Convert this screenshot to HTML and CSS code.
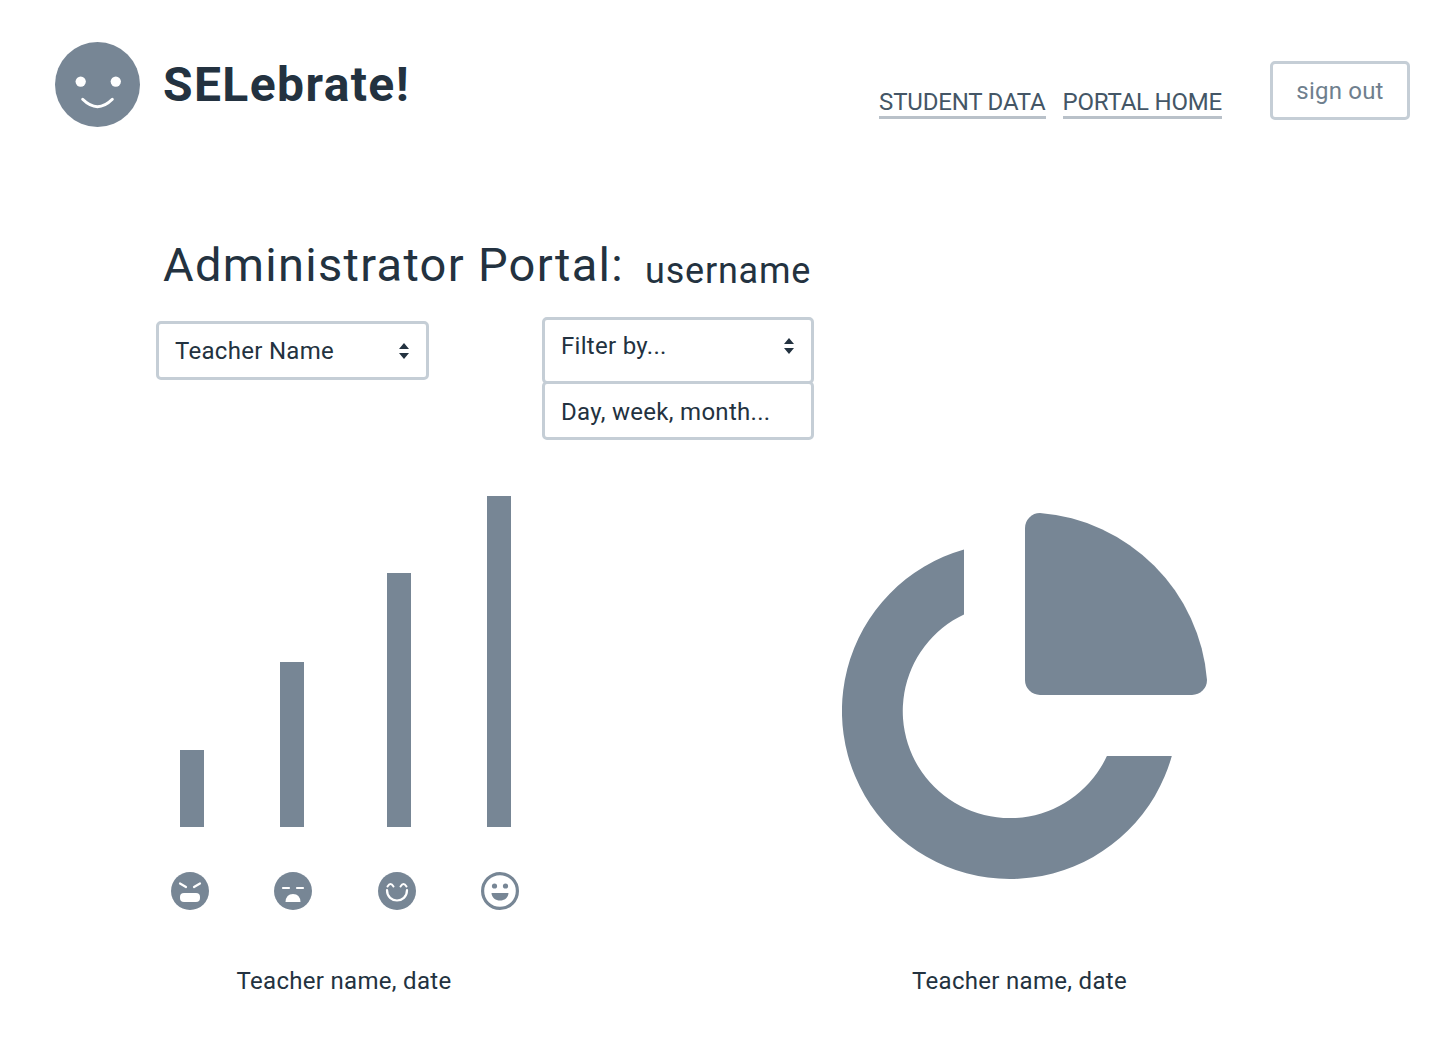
FILE: index.html
```html
<!DOCTYPE html>
<html lang="en">
<head>
    <meta charset="UTF-8">
    <title>SELebrate! Administrator Portal</title>
    <link rel="stylesheet" href="styles.css">
</head>
<body>
    <header class="site-header">
        <div class="brand">
            <svg class="brand-logo" viewBox="0 0 86 86">
                <circle cx="43" cy="43" r="43" fill="#778695"/>
                <circle cx="26" cy="40" r="5.2" fill="#fff"/>
                <circle cx="61.5" cy="40" r="5.2" fill="#fff"/>
                <path d="M28 58 Q43 73 58 58" fill="none" stroke="#fff" stroke-width="3" stroke-linecap="round"/>
            </svg>
            <span class="brand-name">SELebrate!</span>
        </div>
        <nav class="site-nav">
            <a class="nav-link" href="#">STUDENT DATA</a>
            <a class="nav-link" href="#">PORTAL HOME</a>
        </nav>
        <button class="sign-out">sign out</button>
    </header>

    <main class="portal">
        <h1 class="portal-title">Administrator Portal:<span class="portal-user">username</span></h1>

        <div class="filters">
            <div class="picker picker-teacher">
                <span>Teacher Name</span>
                <svg class="updown" viewBox="0 0 10 16"><path d="M5 0 L10 6 H0 Z M5 16 L0 10 H10 Z"/></svg>
            </div>
            <div class="filter-stack">
                <div class="picker picker-filter">
                    <span>Filter by...</span>
                    <svg class="updown" viewBox="0 0 10 16"><path d="M5 0 L10 6 H0 Z M5 16 L0 10 H10 Z"/></svg>
                </div>
                <div class="picker picker-range">
                    <span>Day, week, month...</span>
                </div>
            </div>
        </div>

        <div class="charts">
            <section class="chart chart-bars">
                <div class="bars">
                    <div class="bar" style="height: 77px"></div>
                    <div class="bar" style="height: 165px"></div>
                    <div class="bar" style="height: 254px"></div>
                    <div class="bar" style="height: 331px"></div>
                </div>
                <div class="moods">
                    <svg class="mood" viewBox="0 0 38 38">
                        <circle cx="19" cy="19" r="19" fill="#778695"/>
                        <path d="M9 11.5 L15 15 M29 11.5 L23 15" stroke="#fff" stroke-width="2.2" stroke-linecap="round"/>
                        <rect x="9" y="21" width="20" height="9" rx="4" fill="#fff"/>
                    </svg>
                    <svg class="mood" viewBox="0 0 38 38">
                        <circle cx="19" cy="19" r="19" fill="#778695"/>
                        <path d="M9 16 H15 M23 16 H29" stroke="#fff" stroke-width="2.2" stroke-linecap="round"/>
                        <path d="M11.5 30 Q12 22 19 22 Q26 22 26.5 30 Z" fill="#fff"/>
                    </svg>
                    <svg class="mood" viewBox="0 0 38 38">
                        <circle cx="19" cy="19" r="19" fill="#778695"/>
                        <path d="M9.5 14.5 Q12.5 9.5 15.5 14.5 M22.5 14.5 Q25.5 9.5 28.5 14.5" fill="none" stroke="#fff" stroke-width="2" stroke-linecap="round"/>
                        <path d="M9 18 C9 32 29 32 29 18" fill="none" stroke="#fff" stroke-width="2.2" stroke-linecap="round"/>
                    </svg>
                    <svg class="mood" viewBox="0 0 38 38">
                        <circle cx="19" cy="19" r="17.4" fill="#fff" stroke="#778695" stroke-width="3.2"/>
                        <circle cx="13.5" cy="14" r="2.6" fill="#778695"/>
                        <circle cx="24.5" cy="14" r="2.6" fill="#778695"/>
                        <path d="M10.5 21 H27.5 C27 31 11 31 10.5 21 Z" fill="#778695"/>
                    </svg>
                </div>
                <p class="chart-caption">Teacher name, date</p>
            </section>

            <section class="chart chart-donut">
                <svg class="donut" viewBox="0 0 365 366">
                    <path fill="#778695" d="M122 36.4 V101.4 A107 107 0 1 0 264.9 243 H329.8 A168 168 0 1 1 122 36.4 Z"/>
                    <path fill="#778695" d="M183 15 A15 15 0 0 1 198 0 A182 182 0 0 1 365 167 A15 15 0 0 1 350 182 H198 A15 15 0 0 1 183 167 Z"/>
                </svg>
                <p class="chart-caption">Teacher name, date</p>
            </section>
        </div>
    </main>
</body>
</html>
```

FILE: styles.css
```css
body {
    margin: 0;
    background-color: white;
    color: #233240;
    font-family: Roboto, "Noto Sans", Arial, sans-serif;
}

.site-header {
    display: flex;
    align-items: flex-start;
    height: 86px;
    padding: 42px 30px 0 55px;
}

.brand {
    display: flex;
    align-items: flex-start;
    gap: 23px;
    margin-right: auto;
}

.brand-logo {
    display: block;
    width: 85px;
    height: 85px;
}

.brand-name {
    font-size: 48px;
    font-weight: 700;
    line-height: 86px;
    letter-spacing: 1.4px;
}

.site-nav {
    display: flex;
    gap: 17px;
    margin-top: 47px;
    margin-right: 48px;
}

.nav-link {
    color: #445666;
    font-size: 24px;
    line-height: 26px;
    letter-spacing: -0.2px;
    text-decoration: none;
    border-bottom: 3px solid #b9c1c9;
    padding-bottom: 1px;
}

.sign-out {
    width: 140px;
    height: 59px;
    margin-top: 19px;
    background-color: white;
    border: 3px solid #c5ced6;
    border-radius: 5px;
    color: #6f7f8e;
    font-family: inherit;
    font-size: 24px;
    letter-spacing: 0.2px;
}

.portal {
    padding: 107px 0 0 157px;
}

.portal-title {
    height: 60px;
    margin: 0 0 0 6px;
    font-size: 47px;
    font-weight: 400;
    line-height: 60px;
    letter-spacing: 1.3px;
}

.portal-user {
    margin-left: 21px;
    font-size: 36px;
    letter-spacing: 0.8px;
    vertical-align: -2px;
}

.filters {
    display: flex;
    align-items: flex-start;
    gap: 113px;
    margin-top: 22px;
}

.picker {
    box-sizing: border-box;
    display: flex;
    align-items: center;
    justify-content: space-between;
    width: 272px;
    padding: 0 17px 0 16px;
    background-color: white;
    border: 3px solid #c5ced6;
    border-radius: 5px;
    font-size: 24px;
    letter-spacing: 0.3px;
}

.picker-teacher {
    width: 273px;
    height: 59px;
    margin: 4px 0 0 -1px;
}

.picker-filter {
    height: 67px;
    padding-bottom: 9px;
}

.picker-range {
    height: 59px;
    margin-top: -3px;
    padding-top: 3px;
}

.updown {
    width: 10px;
    height: 16px;
    fill: #233240;
}

.charts {
    display: grid;
    grid-template-columns: 374px 375px;
    column-gap: 301px;
    margin-top: 56px;
}

.bars {
    display: flex;
    align-items: flex-end;
    height: 331px;
    margin-left: 23px;
    gap: 76px;
}

.bar {
    width: 24px;
    background-color: #778695;
}

.bar:nth-child(3) {
    margin-left: 7px;
}

.moods {
    display: flex;
    gap: 65px;
    margin: 45px 0 0 14px;
}

.mood {
    display: block;
    width: 38px;
    height: 38px;
}

.mood:nth-child(3) {
    margin-left: 1px;
}

.chart-caption {
    margin: 0;
    text-align: center;
    font-size: 24px;
    line-height: 30px;
    letter-spacing: 0.3px;
}

.chart-bars .chart-caption {
    margin-top: 56px;
}

.donut {
    display: block;
    width: 365px;
    height: 366px;
    margin: 17px 0 0 10px;
}

.chart-donut .chart-caption {
    margin-top: 87px;
}
```
